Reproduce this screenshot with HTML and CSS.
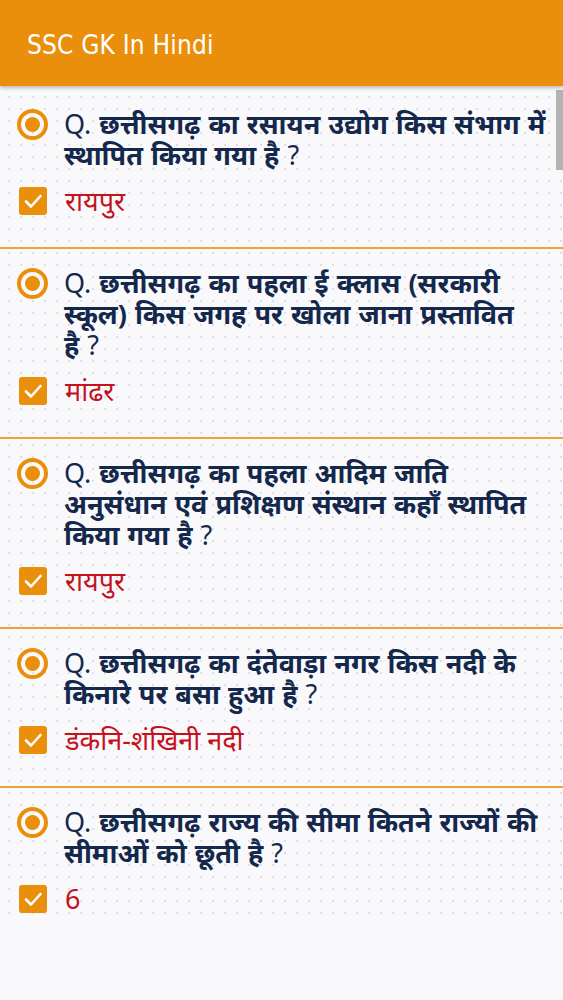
FILE: index.html
```html
<!DOCTYPE html>
<html lang="hi">
<head>
<meta charset="utf-8">
<title>SSC GK In Hindi</title>
<link rel="stylesheet" href="styles.css">
</head>
<body>
<header class="appbar"><h1 class="title">SSC GK In Hindi</h1></header>
<main class="list">
  <div class="scrollbar"></div>
  <section class="card">
    <div class="row">
      <span class="radio"><span class="dot"></span></span>
      <p class="question"><span class="q">Q.</span> <b>छत्तीसगढ़ का रसायन उद्योग किस संभाग में<br>स्थापित किया गया है</b> <span class="q">?</span></p>
    </div>
    <div class="row answer-row">
      <span class="check"><svg viewBox="0 0 28 28" width="28" height="28"><path d="M7 14.5 L12 19.5 L21.5 9" fill="none" stroke="#fff" stroke-width="2.6" stroke-linecap="round" stroke-linejoin="round"/></svg></span>
      <p class="answer">रायपुर</p>
    </div>
  </section>
  <section class="card">
    <div class="row">
      <span class="radio"><span class="dot"></span></span>
      <p class="question"><span class="q">Q.</span> <b>छत्तीसगढ़ का पहला ई क्लास (सरकारी<br>स्कूल) किस जगह पर खोला जाना प्रस्तावित<br>है</b> <span class="q">?</span></p>
    </div>
    <div class="row answer-row">
      <span class="check"><svg viewBox="0 0 28 28" width="28" height="28"><path d="M7 14.5 L12 19.5 L21.5 9" fill="none" stroke="#fff" stroke-width="2.6" stroke-linecap="round" stroke-linejoin="round"/></svg></span>
      <p class="answer">मांढर</p>
    </div>
  </section>
  <section class="card">
    <div class="row">
      <span class="radio"><span class="dot"></span></span>
      <p class="question"><span class="q">Q.</span> <b>छत्तीसगढ़ का पहला आदिम जाति<br>अनुसंधान एवं प्रशिक्षण संस्थान कहाँ स्थापित<br>किया गया है</b> <span class="q">?</span></p>
    </div>
    <div class="row answer-row">
      <span class="check"><svg viewBox="0 0 28 28" width="28" height="28"><path d="M7 14.5 L12 19.5 L21.5 9" fill="none" stroke="#fff" stroke-width="2.6" stroke-linecap="round" stroke-linejoin="round"/></svg></span>
      <p class="answer">रायपुर</p>
    </div>
  </section>
  <section class="card">
    <div class="row">
      <span class="radio"><span class="dot"></span></span>
      <p class="question"><span class="q">Q.</span> <b>छत्तीसगढ़ का दंतेवाड़ा नगर किस नदी के<br>किनारे पर बसा हुआ है</b> <span class="q">?</span></p>
    </div>
    <div class="row answer-row">
      <span class="check"><svg viewBox="0 0 28 28" width="28" height="28"><path d="M7 14.5 L12 19.5 L21.5 9" fill="none" stroke="#fff" stroke-width="2.6" stroke-linecap="round" stroke-linejoin="round"/></svg></span>
      <p class="answer">डंकनि-शंखिनी नदी</p>
    </div>
  </section>
  <section class="card last">
    <div class="row">
      <span class="radio"><span class="dot"></span></span>
      <p class="question"><span class="q">Q.</span> <b>छत्तीसगढ़ राज्य की सीमा कितने राज्यों की<br>सीमाओं को छूती है</b> <span class="q">?</span></p>
    </div>
    <div class="row answer-row">
      <span class="check"><svg viewBox="0 0 28 28" width="28" height="28"><path d="M7 14.5 L12 19.5 L21.5 9" fill="none" stroke="#fff" stroke-width="2.6" stroke-linecap="round" stroke-linejoin="round"/></svg></span>
      <p class="answer">6</p>
    </div>
  </section>
</main>
</body>
</html>
```
FILE: styles.css
```css
* { box-sizing: border-box; }
html, body { margin: 0; padding: 0; }
body {
  background: #f8f8fb;
  font-family: "Noto Sans", "Lato", sans-serif;
  width: 563px;
  min-height: 1000px;
  overflow: hidden;
}
.appbar {
  height: 86px;
  background: #ea8f0b;
  box-shadow: 0 2px 4px rgba(0,0,0,0.25);
  display: flex;
  align-items: center;
  padding-left: 27px;
  position: relative;
  z-index: 2;
}
.title {
  margin: 0;
  color: #fff;
  font-family: "DejaVu Sans Condensed", "DejaVu Sans", sans-serif;
  font-stretch: condensed;
  font-weight: normal;
  font-size: 26px;
  letter-spacing: 0.2px;
  padding-top: 4px;
}
.list {
  position: relative;
  margin-top: 2px;
  padding-top: 2px;
  background-color: #f9f9fc;
  background-image: radial-gradient(circle, #dedee6 1px, transparent 1.3px);
  background-size: 12px 12px;
  background-position: 3px 3px;
}
.scrollbar {
  position: absolute;
  right: 0;
  top: 2px;
  width: 7px;
  height: 80px;
  background: #b3b3b3;
}
.card {
  padding: 18px 6px 31px 17px;
  border-bottom: 2px solid #eaa43c;
}
.card.last { border-bottom: none; padding-bottom: 8px; }
.row {
  display: flex;
  align-items: flex-start;
  gap: 16px;
}
.radio {
  flex: none;
  width: 31px;
  height: 31px;
  border: 4px solid #ea8f0b;
  border-radius: 50%;
  display: flex;
  align-items: center;
  justify-content: center;
  margin-top: 1px;
}
.dot {
  width: 15px;
  height: 15px;
  border-radius: 50%;
  background: #ea8f0b;
}
.question {
  margin: 0;
  color: #14284c;
  font-size: 27px;
  line-height: 31px;
  word-spacing: 1px;
  white-space: nowrap;
}
.question b { font-weight: 700; }
.q { font-weight: 400; }
.answer-row {
  margin-top: 16px;
  align-items: center;
  gap: 18px;
}
.check {
  flex: none;
  width: 28px;
  height: 28px;
  margin-left: 2px;
  background: #ea8f0b;
  border-radius: 3px;
  display: flex;
}
.answer {
  margin: 0;
  color: #c4111c;
  font-size: 27px;
  line-height: 30px;
}
```
